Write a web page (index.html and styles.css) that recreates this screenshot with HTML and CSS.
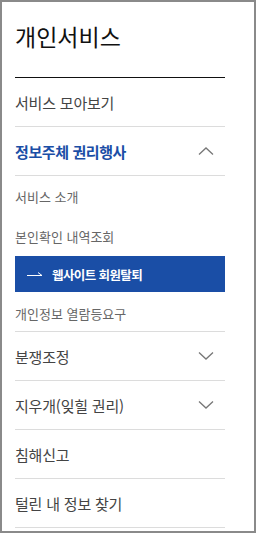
FILE: index.html
```html
<!DOCTYPE html>
<html lang="ko">
<head>
<meta charset="utf-8">
<link rel="stylesheet" href="styles.css">
</head>
<body>
<div class="frame">
  <div class="head"><h1 class="title">개인서비스</h1></div>
  <ul class="menu">
    <li class="row"><span>서비스 모아보기</span></li>
    <li class="row active"><span>정보주체 권리행사</span>
      <svg class="chev" width="16" height="8" viewBox="0 0 16 8"><path d="M1 7.5 L8 1 L15 7.5" fill="none" stroke="#777" stroke-width="1.3"/></svg>
    </li>
    <li class="sub">
      <ul class="sublist">
        <li class="subitem">서비스 소개</li>
        <li class="subitem">본인확인 내역조회</li>
        <li class="subitem current">
          <svg class="arrow" width="16" height="6" viewBox="0 0 16 6"><path d="M0 4.5 H15 L11 1.5" fill="none" stroke="#fff" stroke-width="1"/></svg>
          <span>웹사이트 회원탈퇴</span>
        </li>
        <li class="subitem last">개인정보 열람등요구</li>
      </ul>
    </li>
    <li class="row"><span>분쟁조정</span>
      <svg class="chev" width="16" height="8" viewBox="0 0 16 8"><path d="M1 0.5 L8 7 L15 0.5" fill="none" stroke="#777" stroke-width="1.3"/></svg>
    </li>
    <li class="row"><span>지우개(잊힐 권리)</span>
      <svg class="chev" width="16" height="8" viewBox="0 0 16 8"><path d="M1 0.5 L8 7 L15 0.5" fill="none" stroke="#777" stroke-width="1.3"/></svg>
    </li>
    <li class="row"><span>침해신고</span></li>
    <li class="row"><span>털린 내 정보 찾기</span></li>
  </ul>
</div>
</body>
</html>
```

FILE: styles.css
```css
html, body {
  margin: 0;
  padding: 0;
  background: #fff;
}
body {
  font-family: "Noto Sans CJK KR", "Noto Sans", sans-serif;
}
.frame {
  box-sizing: border-box;
  width: 256px;
  height: 533px;
  border: 2px solid #8a8a8a;
  padding: 0 29px 0 13px;
  overflow: hidden;
}
.head {
  box-sizing: border-box;
  height: 76px;
  border-bottom: 1px solid #111;
}
.title {
  margin: 0;
  padding-top: 20px;
  font-size: 23px;
  line-height: 28px;
  font-weight: 400;
  color: #111;
}
.menu, .sublist {
  list-style: none;
  margin: 0;
  padding: 0;
}
.row {
  height: 48px;
  border-bottom: 1px solid #dcdcdc;
  display: flex;
  align-items: center;
  justify-content: space-between;
  font-size: 15px;
  color: #444;
  letter-spacing: -0.2px;
}
.row .chev {
  margin-right: 11px;
}
.row.active {
  color: #1a4ea6;
  font-weight: 700;
  letter-spacing: -0.4px;
}
.sub {
  border-bottom: 1px solid #dcdcdc;
}
.subitem {
  height: 40px;
  display: flex;
  align-items: center;
  font-size: 13px;
  color: #666;
}
.subitem.last {
  box-sizing: border-box;
  height: 39px;
  padding-top: 4px;
}
.subitem.current {
  height: 36px;
  background: #1a4ea6;
  color: #fff;
  font-weight: 700;
  font-size: 12.5px;
  padding-left: 12px;
  letter-spacing: -0.6px;
}
.arrow {
  margin-right: 9px;
}
```
